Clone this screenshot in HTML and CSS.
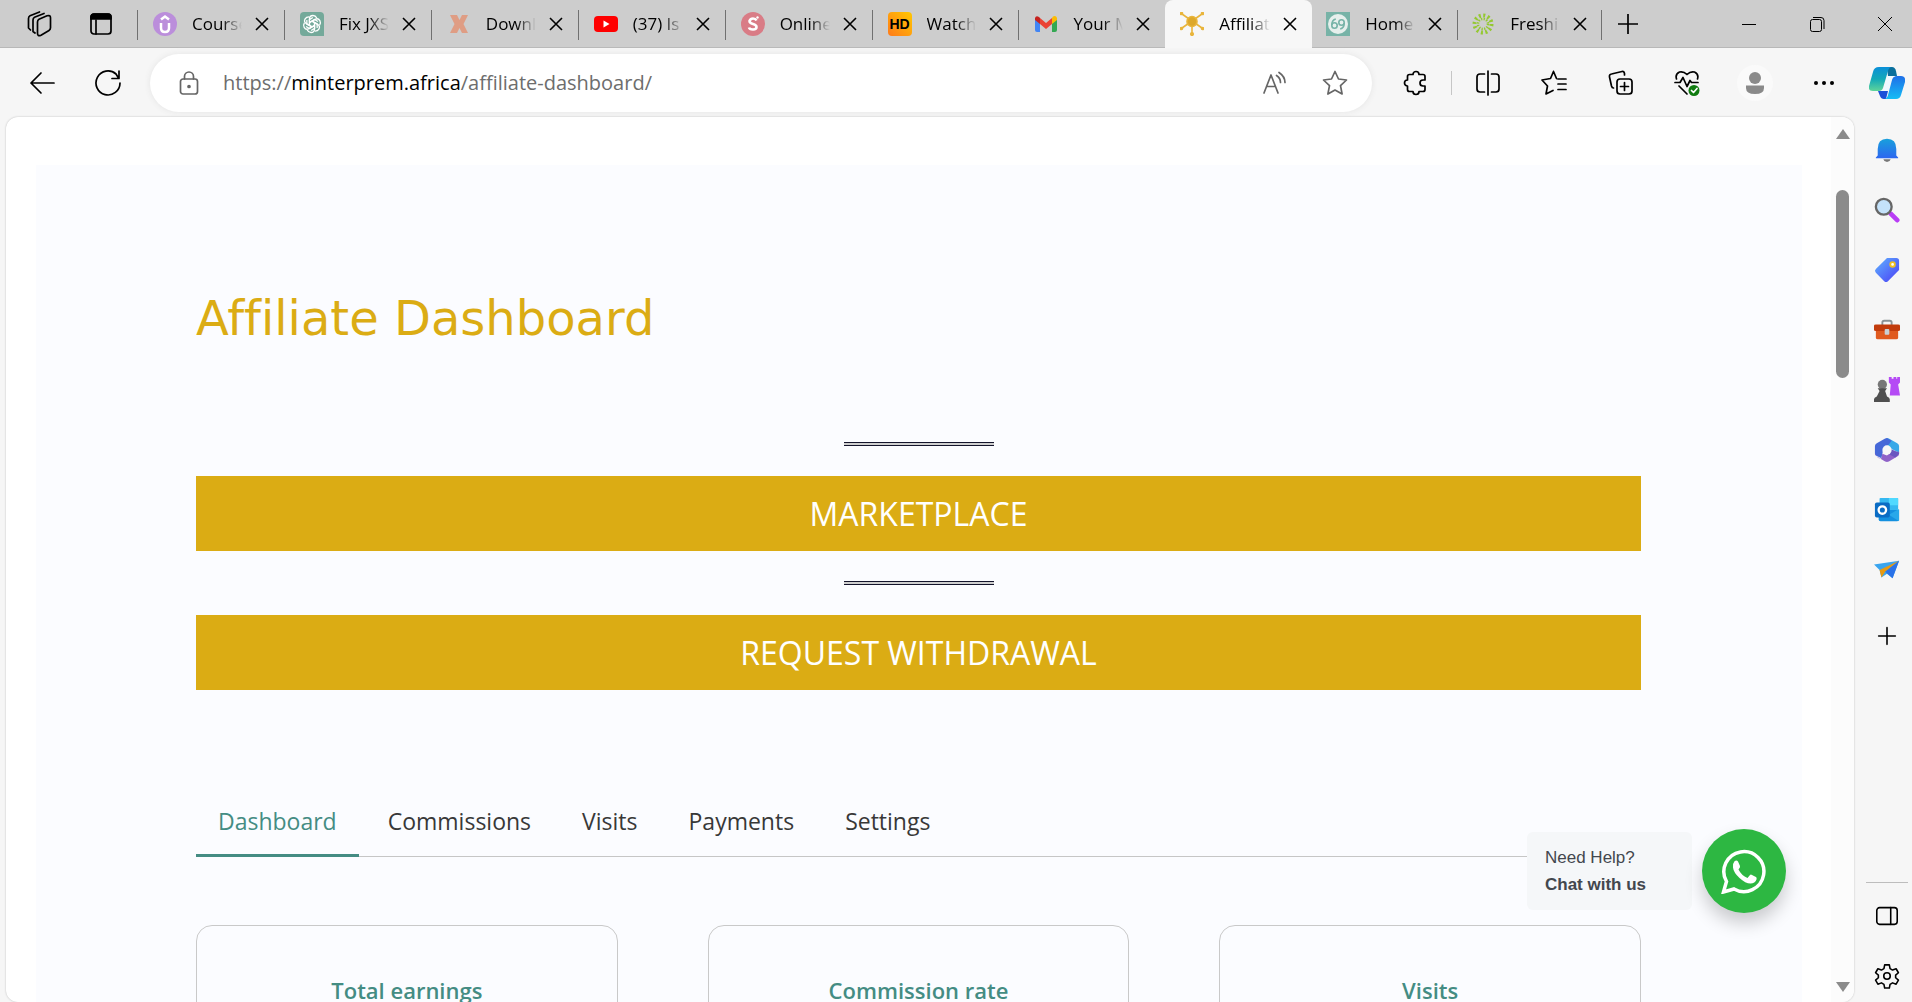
FILE: index.html
```html
<!DOCTYPE html>
<html lang="en">
<head>
<meta charset="utf-8">
<title>Affiliate Dashboard</title>
<link rel="stylesheet" href="styles.css">
</head>
<body>
<div class="browser">
  <header class="tabstrip">
    <div class="strip-tools">
      <button class="icon-btn" aria-label="Workspaces"><svg width="26" height="26" viewBox="0 0 26 26" class="line"><path d="M11.500 11q0-2 1.500-2.800l8-3.400q3.500-1 3.500 2v10q0 1.700-1.500 2.600l-8 4.800q-3.500 1.500-3.500-2z"/><path d="M9 22l-2-1.500V9q0-2 1.500-2.800L18 2.500M4.500 19L2.500 17V7.500q0-2 1.500-2.800L13.500 1"/></svg></button>
      <button class="icon-btn" aria-label="Tab actions"><svg width="22" height="22" viewBox="0 0 22 22" class="line"><rect x="1" y="1" width="20" height="20" rx="3"/><path d="M1 6V4q0-3 3-3h14q3 0 3 3v2z" fill="#000"/><path d="M6 7v14"/></svg></button>
    </div>
    <nav class="tabs" aria-label="Open tabs">
      <div class="tab"><svg class="fav" viewBox="0 0 24 24"><circle cx="12" cy="12" r="12" fill="#bb8edb"/><path d="M8 11v5q0 4 4 4t4-4v-5M8 7.500l4-3 4 3" fill="none" stroke="#fff" stroke-width="2.500"/></svg><span class="label">Course</span><button class="close" aria-label="Close tab"><svg viewBox="0 0 14 14"><path d="M1 1l12 12M13 1L1 13"/></svg></button></div>
      <div class="tab"><svg class="fav" viewBox="0 0 24 24"><path d="M4 0h16q4 0 4 4v20H4q-4 0-4-4V4q0-4 4-4z" fill="#74a99a"/><g fill="none" stroke="#fff" stroke-width="1.300"><path id="petal" d="M9.500 13.500V7q0-3.500 3.500-3.500 2.500 0 3.800 2.500M9.500 10.500l5-3 3.500 2"/><use href="#petal" transform="rotate(60 12 12)"/><use href="#petal" transform="rotate(120 12 12)"/><use href="#petal" transform="rotate(180 12 12)"/><use href="#petal" transform="rotate(240 12 12)"/><use href="#petal" transform="rotate(300 12 12)"/></g></svg><span class="label">Fix JXS</span><button class="close" aria-label="Close tab"><svg viewBox="0 0 14 14"><path d="M1 1l12 12M13 1L1 13"/></svg></button></div>
      <div class="tab"><svg class="fav" viewBox="0 0 24 24"><path d="M3 3h7l2.500 5L15 3h6l-4.500 9L21 21h-6l-2.500-5L10 21H3l4.500-9z" fill="#df9d84"/></svg><span class="label">Downl</span><button class="close" aria-label="Close tab"><svg viewBox="0 0 14 14"><path d="M1 1l12 12M13 1L1 13"/></svg></button></div>
      <div class="tab"><svg class="fav" viewBox="0 0 24 24"><rect y="4" width="24" height="16" rx="4" fill="#f00"/><path d="M9.500 8.500v7l6-3.500z" fill="#fff"/></svg><span class="label">(37) Is</span><button class="close" aria-label="Close tab"><svg viewBox="0 0 14 14"><path d="M1 1l12 12M13 1L1 13"/></svg></button></div>
      <div class="tab"><svg class="fav" viewBox="0 0 24 24"><circle cx="12" cy="12" r="12" fill="#d97c86"/><path d="M15.500 8.500q-1-2-3.500-2T8.500 9q0 2 3.500 3t3.500 3q0 2.500-3.500 2.500t-4-2" fill="none" stroke="#fff" stroke-width="2.600"/><circle cx="16.500" cy="5.500" r="1.200" fill="#fff"/></svg><span class="label">Online</span><button class="close" aria-label="Close tab"><svg viewBox="0 0 14 14"><path d="M1 1l12 12M13 1L1 13"/></svg></button></div>
      <div class="tab"><span class="fav fav-hd">HD</span><span class="label">Watch</span><button class="close" aria-label="Close tab"><svg viewBox="0 0 14 14"><path d="M1 1l12 12M13 1L1 13"/></svg></button></div>
      <div class="tab"><svg class="fav" viewBox="0 0 24 24"><path d="M1 6v12q0 2 2 2h3V9z" fill="#4285f4"/><path d="M23 6v12q0 2-2 2h-3V9z" fill="#34a853"/><path d="M18 6v6l5-4V6q-1-3-4-1.500z" fill="#fbbc04"/><path d="M6 6l6 5 6-5v6l-6 5-6-5z" fill="#ea4335"/><path d="M6 6v6L1 8V6q1-3 4-1z" fill="#c5221f"/></svg><span class="label">Your M</span><button class="close" aria-label="Close tab"><svg viewBox="0 0 14 14"><path d="M1 1l12 12M13 1L1 13"/></svg></button></div>
      <div class="tab active"><svg class="fav" viewBox="0 0 24 24"><g stroke="#e9b53c" stroke-width="1.600" fill="#e9b53c"><path d="M12 9L2 2M12 9l10-7M12 9L2 16M12 9l10 7M12 9v12"/><circle cx="12" cy="9.500" r="5" fill="#dda82a"/><circle cx="12" cy="22" r="1.300"/><circle cx="1.500" cy="1.500" r="1"/><circle cx="22.500" cy="1.500" r="1"/><circle cx="1.500" cy="16.500" r="1"/><circle cx="22.500" cy="16.500" r="1"/></g></svg><span class="label">Affiliat</span><button class="close" aria-label="Close tab"><svg viewBox="0 0 14 14"><path d="M1 1l12 12M13 1L1 13"/></svg></button></div>
      <div class="tab short"><svg class="fav" viewBox="0 0 24 24"><path d="M0 0h24v24H0z" fill="#77b3a7"/><circle cx="12" cy="12" r="10" fill="#e6efec"/><g fill="none" stroke="#77b3a7" stroke-width="1.600"><circle cx="8.500" cy="13.500" r="2.700"/><path d="M5.800 13q0-5 4-6"/><circle cx="15.500" cy="10.500" r="2.700"/><path d="M18.200 11q0 5-4 6"/></g></svg><span class="label">Home</span><button class="close" aria-label="Close tab"><svg viewBox="0 0 14 14"><path d="M1 1l12 12M13 1L1 13"/></svg></button></div>
      <div class="tab short"><svg class="fav" viewBox="0 0 24 24"><g fill="none" stroke="#94c830"><circle cx="12" cy="12" r="8.500" stroke-dasharray="2 2.450" stroke-width="4"/><circle cx="12" cy="12" r="5" stroke-dasharray="1.300 1.318" stroke-width="2.500"/></g></svg><span class="label">Freshi</span><button class="close" aria-label="Close tab"><svg viewBox="0 0 14 14"><path d="M1 1l12 12M13 1L1 13"/></svg></button></div>
    </nav>
    <button class="icon-btn new-tab" aria-label="New tab"><svg width="20" height="20" viewBox="0 0 20 20" class="line"><path d="M10 0v20M0 10h20"/></svg></button>
    <div class="window-controls">
      <button class="icon-btn" aria-label="Minimize"><svg width="16" height="16" viewBox="0 0 16 16" class="thin"><path d="M1 8.500h14"/></svg></button>
      <button class="icon-btn" aria-label="Restore"><svg width="16" height="16" viewBox="0 0 16 16" class="thin"><rect x="1.500" y="3.500" width="11" height="12" rx="2"/><path d="M4 1.500h8q3 0 3 3V13"/></svg></button>
      <button class="icon-btn" aria-label="Close window"><svg width="16" height="16" viewBox="0 0 16 16" class="thin"><path d="M1 1l14 14M15 1L1 15"/></svg></button>
    </div>
  </header>

  <div class="toolbar">
    <div class="nav-tools">
      <button class="icon-btn" aria-label="Back"><svg width="26" height="24" viewBox="0 0 26 24" class="line"><path d="M25 12H2M12 2L2 12l10 10"/></svg></button>
      <button class="icon-btn" aria-label="Refresh"><svg width="26" height="26" viewBox="0 0 26 26" class="line"><path d="M25 13a12 12 0 1 1-4-9l2.500 4M24 1v7.500h-7"/></svg></button>
    </div>
    <div class="address">
      <svg width="20" height="24" viewBox="0 0 20 24" class="line grey"><rect x="1.500" y="8" width="17" height="15" rx="2.500"/><path d="M5.500 8V5.500a4.500 4.500 0 0 1 9 0V8"/><circle cx="10" cy="15.500" r="1" fill="#666"/></svg>
      <a class="url" href="https://minterprem.africa/affiliate-dashboard/">https://<span class="host">minterprem.africa</span>/affiliate-dashboard/</a>
      <button class="icon-btn" aria-label="Read aloud"><svg width="26" height="24" viewBox="0 0 26 24" class="line grey"><path d="M2 22L9 4l7 18M4.500 15.500h9M14.500 4.500q4 2.500 4 7M17 1.500q6 4 6 10"/></svg></button>
      <button class="icon-btn" aria-label="Add to favorites"><svg width="26" height="26" viewBox="0 0 26 26" class="line grey"><path d="M13 1.500l3.500 7.500 8 1-6 5.700 1.600 8.300L13 20l-7.100 4 1.600-8.300-6-5.700 8-1z"/></svg></button>
    </div>
    <div class="actions">
      <button class="icon-btn" aria-label="Extensions"><svg width="26" height="26" viewBox="0 0 26 26" class="line"><path d="M6.500 4.500H10a3 3 0 0 1 6 0h4q2 0 2 2V10h-2a3 3 0 0 0 0 6h2v3.500q0 2-2 2h-4a3 3 0 0 1-6 0H6.500q-2 0-2-2V16a3 3 0 0 1 0-6V6.500q0-2 2-2z"/></svg></button>
      <span class="rule"></span>
      <button class="icon-btn" aria-label="Split screen"><svg width="26" height="26" viewBox="0 0 26 26" class="line"><path d="M13 1v24M9.500 4H5Q2 4 2 7v12q0 3 3 3h4.500M16.500 4H21q3 0 3 3v12q0 3-3 3h-4.500"/></svg></button>
      <button class="icon-btn" aria-label="Favorites"><svg width="26" height="26" viewBox="0 0 26 26" class="line"><path d="M17 9h8M17 14h8M17 19.500h8M12.500 1.500l-3 7L1 10l5.500 6-1.500 8 7-3.500M12.500 1.500l3 7"/></svg></button>
      <button class="icon-btn" aria-label="Collections"><svg width="26" height="26" viewBox="0 0 26 26" class="line"><rect x="9" y="9" width="15" height="15" rx="3"/><path d="M16.500 12.500v8M12.500 16.500h8M5.500 18Q4 18 3.500 16L1.500 7Q1 4.500 3.500 4L14 1.500q2-.5 2.500 2V5"/></svg></button>
      <button class="icon-btn" aria-label="Browser essentials"><svg width="26" height="26" viewBox="0 0 26 26" class="line"><path d="M2.500 9q-1.500-5 3-7 4-1 7.500 2.500Q16.500 1 20.500 2q4.500 2 3 7M1 12.500h5l3-5 4 9 3-6 1.500 2H24M5 16l8 8"/><circle cx="20" cy="20.500" r="5.500" fill="#107c10" stroke="none"/><path d="M17.500 20.500l2 2 3.500-4" stroke="#fff"/></svg></button>
      <button class="icon-btn avatar" aria-label="Profile"><svg width="20" height="24" viewBox="0 0 20 24" fill="#8a8a8a"><circle cx="10" cy="7" r="6"/><path d="M1 14.500h18v2.500q0 6-9 6t-9-6z"/></svg></button>
      <button class="icon-btn" aria-label="Settings and more"><svg width="22" height="6" viewBox="0 0 22 6"><circle cx="3" cy="3" r="2"/><circle cx="11" cy="3" r="2"/><circle cx="19" cy="3" r="2"/></svg></button>
    </div>
    <button class="icon-btn copilot" aria-label="Copilot"><svg width="36" height="34" viewBox="0 0 36 34"><defs><linearGradient id="cpa" x1="0" y1="0" x2="0" y2="1"><stop offset="0" stop-color="#0a8fd8"/><stop offset=".5" stop-color="#12a9b8"/><stop offset="1" stop-color="#5fd49a"/></linearGradient><linearGradient id="cpb" x1="0" y1="0" x2="0" y2="1"><stop offset="0" stop-color="#1f6fe8"/><stop offset="1" stop-color="#15bdf5"/></linearGradient></defs><path d="M9 25h10l-2 8h-2q-3 0-4-3z" fill="#1b50d8"/><path d="M18 1h5q3 0 4 4l1 5h-9z" fill="#0b6f9c"/><path d="M10 1h13q-3 0-4 4l-5 17q-1 3-4 3H4q-5 0-4-5L4 6q1-5 6-5z" fill="url(#cpa)"/><path d="M27 33H15q3 0 4-4l4-15q1-4 5-4h4q5 0 4 6l-4 13q-1 4-5 4z" fill="url(#cpb)"/><path d="M20 10h6q-3 1-4 5l-2 7q-1 3-4 3h-4q2 0 3-3l3-10q0-2 2-2z" fill="#eef9ff"/></svg></button>
  </div>

  <div class="workspace">
    <div class="viewport">
      <main class="page">
        <section class="panel">
          <h1>Affiliate Dashboard</h1>
          <hr>
          <button class="cta">MARKETPLACE</button>
          <hr>
          <button class="cta">REQUEST WITHDRAWAL</button>
          <nav class="menu">
            <a href="#dashboard" class="current">Dashboard</a>
            <a href="#commissions">Commissions</a>
            <a href="#visits">Visits</a>
            <a href="#payments">Payments</a>
            <a href="#settings">Settings</a>
          </nav>
          <div class="cards">
            <article class="card"><h2>Total earnings</h2></article>
            <article class="card"><h2>Commission rate</h2></article>
            <article class="card"><h2>Visits</h2></article>
          </div>
        </section>
      </main>
      <div class="scrollbar"><span class="arrow up"></span><span class="thumb"></span><span class="arrow down"></span></div>
      <aside class="chat">
        <div class="bubble">Need Help?<br><strong>Chat with us</strong></div>
        <button class="whatsapp" aria-label="Chat on WhatsApp"><svg width="46" height="46" viewBox="0 0 46 46"><path d="M2.500 44l3-10.500A20 20 0 1 1 13 41z" fill="none" stroke="#fff" stroke-width="3.500"/><path d="M15 12.500q1.500 0 2 1l2 4.500q.5 1-1.500 3.500 3 6 9 8.500l2.500-3q.6-.7 1.500-.3l4.500 2.200q1 .6.500 2.600-1.500 4-6 4-5 0-11-5.500T12 19.500q-.5-4 1.500-6.200z" fill="#fff"/></svg></button>
      </aside>
    </div>
    <aside class="sidebar">
      <button class="side" aria-label="Notifications"><svg viewBox="0 0 28 28"><path d="M10 24h8q-1 3-4 3t-4-3z" fill="#777"/><path d="M4 20v-7Q4 2 14 2t10 11v7l2 2v1H2v-1z" fill="url(#bell)"/><defs><linearGradient id="bell" x1="0" y1="0" x2="0" y2="1"><stop offset="0" stop-color="#18a0dc"/><stop offset="1" stop-color="#2d66f0"/></linearGradient></defs></svg></button>
      <button class="side" aria-label="Search"><svg viewBox="0 0 28 28"><path d="M18 18l7 7" stroke="#b83df5" stroke-width="5" stroke-linecap="round"/><circle cx="10.500" cy="10.500" r="8.500" fill="#c4e2fa" stroke="#666" stroke-width="2.500"/></svg></button>
      <button class="side" aria-label="Shopping"><svg viewBox="0 0 28 28"><defs><linearGradient id="tag" x1="0" y1="0" x2="1" y2="1"><stop offset="0" stop-color="#5fb4ff"/><stop offset="1" stop-color="#4a3df5"/></linearGradient></defs><path d="M14 1h10q3 0 3 3v10L15 26q-2 2-4 0l-9-9q-2-2 0-4z" fill="url(#tag)"/><circle cx="20" cy="8" r="2.500" fill="#fff" stroke="#f0c020" stroke-width="2"/></svg></button>
      <button class="side" aria-label="Tools"><svg viewBox="0 0 28 28"><path d="M9 9V6q0-2 2-2h6q2 0 2 2v3" fill="none" stroke="#8a9295" stroke-width="2"/><rect x="2" y="9" width="24" height="15" rx="2" fill="#e05a1e"/><path d="M0 9q0-1 2-1h24q2 0 2 1v5q0 1-2 1H2q-2 0-2-1z" fill="#c23c0c"/><rect x="11.500" y="13" width="5" height="6" rx="1" fill="#c9d0d4"/></svg></button>
      <button class="side" aria-label="Games"><svg viewBox="0 0 28 28"><path d="M16 0h3v2h2V0h3v2h1V0h3v6l-2 2 2 12H17l1-12-2-2z" fill="#b54af5"/><circle cx="9" cy="8" r="5" fill="#777"/><path d="M4 12h10l-2 3 2 6q3 1 3 3v3H0v-3q0-2 3-3l3-6z" fill="#505050"/></svg></button>
      <button class="side" aria-label="Microsoft 365"><svg viewBox="0 0 28 28"><path d="M14 1q1 0 2 .6l9 5.200q2 1 2 3V17l-8-4-5-4-4-4z" fill="#38a8e8"/><path d="M14 1q-1 0-2 .6L3 6.800Q1 8 1 10v8q0 1 1 2l6 3 2-10 6-5 3-4z" fill="#4668d8"/><path d="M2 18q0 2 1 3l9 5.500q2 1 4 0l9-5.500q2-1 2-3v-2l-9 0-4 4-5-2-1 5q-4 1-7-5z" fill="#8f62c8"/><path d="M18 13l9 4v1l-4 4-6-3z" fill="#6a56c0"/><circle cx="14" cy="14" r="5" fill="#f7f7f7"/></svg></button>
      <button class="side" aria-label="Outlook"><svg viewBox="0 0 28 28"><rect x="6" y="1" width="20" height="13" rx="1" fill="#35b8f1"/><path d="M16 1h9q1 0 1 1v7H16z" fill="#50d9ff"/><path d="M5 14h22v10q0 2-2 2H7q-2 0-2-2z" fill="#1490df"/><path d="M27 13v13l-11-7z" fill="#28a8ea"/><rect x="1" y="6" width="16" height="16" rx="2" fill="#0a6cc4"/><circle cx="9" cy="14" r="4" fill="none" stroke="#fff" stroke-width="2.500"/></svg></button>
      <button class="side" aria-label="Drop"><svg viewBox="0 0 28 28"><path d="M0 8l27-4-7 19-6-5-6 4-2-8z" fill="#3aa5ef"/><path d="M27 4L6 14l2 8 4-6z" fill="#e89a12"/><path d="M27 4l-7 19-8-7z" fill="#2a72e8"/></svg></button>
      <button class="side add" aria-label="Customize"><svg viewBox="0 0 28 28" class="line"><path d="M14 5v18M5 14h18"/></svg></button>
      <div class="side-bottom">
        <button class="side" aria-label="Toggle sidebar"><svg viewBox="0 0 28 28" class="line"><rect x="3" y="5" width="22" height="18" rx="3"/><path d="M18 5v18"/></svg></button>
        <button class="side" aria-label="Settings"><svg viewBox="0 0 28 28" class="line"><path d="M11.500 2h5l.8 4 2.700 1.600 3.800-1.400 2.500 4.300-3 2.600v2.800l3 2.600-2.500 4.300-3.800-1.400-2.700 1.600-.8 4h-5l-.8-4L8 21.400l-3.800 1.400-2.500-4.300 3-2.600v-2.800l-3-2.600 2.500-4.300L8 7.600 10.700 6z"/><circle cx="14" cy="14" r="3.500"/></svg></button>
      </div>
    </aside>
  </div>
</div>
</body>
</html>
```

FILE: styles.css
```css
* { box-sizing: border-box; }
body { margin: 0; font-family: "Open Sans", "Noto Sans", sans-serif; color: #000; }
button { border: 0; padding: 0; background: none; font: inherit; color: inherit; }
svg { display: block; }
.line { fill: none; stroke: #000; stroke-width: 1.7; stroke-linecap: round; stroke-linejoin: round; }
.thin { fill: none; stroke: #000; stroke-width: 1; }
.grey { stroke: #666; }

.browser { height: 100vh; display: flex; flex-direction: column; overflow: hidden; background: #f6f6f6; }
.icon-btn { display: flex; align-items: center; justify-content: center; flex: none; }

.tabstrip { height: 48px; flex: none; display: flex; background: #cdcdcd; box-shadow: inset 0 -1px #b8b8b8; }
.strip-tools { width: 137px; flex: none; display: flex; align-items: center; gap: 38px; padding-left: 26px; }
.tabs { flex: 0 1 1465px; min-width: 0; display: flex; }
.tab { flex: 0 1 147px; min-width: 0; display: flex; align-items: center; padding: 0 15px 0 16px; background: linear-gradient(#707070, #707070) left 10px / 1px 30px no-repeat; }
.tab.short { flex-basis: 145px; padding-left: 14px; }
.tab.active { background: #f7f7f7; border-radius: 8px 8px 0 0; padding-left: 15px; }
.tab.active + .tab { background: none; }
.tab:last-child { background: linear-gradient(#707070, #707070) left 10px / 1px 30px no-repeat, linear-gradient(#707070, #707070) right 10px / 1px 30px no-repeat; }
.fav { width: 24px; height: 24px; flex: none; margin-right: 15px; }
.fav-hd { border-radius: 4px; background: linear-gradient(45deg, #ff7a1a, #ffc800); font: bold 14px/24px "Liberation Sans", sans-serif; text-align: center; }
.label { flex: 1; min-width: 0; overflow: hidden; white-space: nowrap; font-size: 17px; line-height: 28px; -webkit-mask-image: linear-gradient(to left, transparent, #000 20px); mask-image: linear-gradient(to left, transparent, #000 20px); }
.close { margin-left: 13px; flex: none; }
.close svg { width: 14px; height: 14px; fill: none; stroke: #000; stroke-width: 1.6; }
.new-tab { width: 52px; }
.window-controls { margin-left: auto; display: flex; gap: 52px; padding-right: 19px; }

.toolbar { height: 69px; flex: none; display: flex; align-items: center; }
.nav-tools { width: 150px; flex: none; display: flex; gap: 40px; padding-left: 29px; }
.address { flex: 1; min-width: 0; height: 58px; display: flex; align-items: center; gap: 34px; padding: 0 24px 0 29px; border-radius: 29px; background: #fff; box-shadow: 0 0 6px #e4e4e4; }
.url { flex: 1; min-width: 0; color: #6d6d6d; text-decoration: none; font-size: 20px; line-height: 28px; white-space: nowrap; margin-left: -10px; }
.host { color: #000; }
.actions { width: 482px; flex: none; display: flex; align-items: center; justify-content: space-between; padding: 0 19px 0 31px; }
.rule { width: 1px; height: 24px; background: #c6c6c6; margin: 0 -18px; }
.avatar { width: 36px; height: 36px; border-radius: 50%; background: #fafafa; margin: 0 0 0 -4px; }
.copilot { width: 58px; padding-left: 8px; }

.workspace { flex: 1; min-height: 0; display: flex; padding-left: 6px; }
.viewport { position: relative; flex: 1; min-width: 0; display: flex; overflow: hidden; background: #fff; border-radius: 12px; box-shadow: 0 0 2px #b8b8b8; }
.page { flex: 1; min-width: 0; padding: 48px 29px 0 30px; }
.panel { height: 1200px; padding: 118px 161px 0 160px; background: #fbfcff; }
h1 { margin: 0 0 89px; font: 400 48px/70px "DejaVu Sans", sans-serif; font-variant-ligatures: none; color: #dbac14; }
hr { width: 150px; height: 4px; margin: 0 auto; border: 1px solid #14142b; border-width: 1px 0; background: #cfcfcf; }
.cta { display: block; width: 100%; height: 75px; margin: 30px 0; background: #dbac14; color: #fff; font-size: 32px; line-height: 48px; }
.menu { display: flex; margin-top: 93px; height: 74px; border-bottom: 1px solid #c6c6c6; }
.menu a { padding: 22px 22px 0; height: 74px; color: #383838; text-decoration: none; font-size: 23px; line-height: 32px; margin-right: 7px; }
.menu .current { color: #448c83; border-bottom: 3px solid #448c83; }
.cards { display: grid; grid-template-columns: repeat(3, 1fr); gap: 90px; margin-top: 68px; }
.card { height: 240px; border: 1px solid #c9c9c9; border-radius: 16px; padding-top: 48px; text-align: center; }
h2 { margin: 0; font-size: 22px; line-height: 32px; font-weight: 600; color: #448c83; }

.scrollbar { width: 23px; flex: none; display: flex; flex-direction: column; align-items: center; padding: 12px 0 10px; background: #fcfcfc; }
.arrow { border: 7px solid transparent; }
.up { border-top: 0; border-bottom: 10px solid #8b8b8b; }
.down { border-bottom: 0; border-top: 10px solid #8b8b8b; margin-top: auto; }
.thumb { width: 13px; height: 188px; margin-top: 51px; border-radius: 7px; background: #8b8b8b; }
.chat { position: absolute; right: 68px; bottom: 89px; display: flex; align-items: center; gap: 10px; }
.bubble { width: 165px; height: 78px; padding: 12px 18px; border-radius: 6px; background: #f5f7f9; color: #43474e; font: 17px/27px "Liberation Sans", Arial, sans-serif; }
.whatsapp { width: 84px; height: 84px; display: flex; align-items: center; justify-content: center; border-radius: 50%; background: #2db742; box-shadow: 0 10px 18px rgba(0, 0, 0, .2); }

.sidebar { width: 58px; flex: none; display: flex; flex-direction: column; align-items: center; padding: 3px 0 0 8px; }
.side { height: 60px; flex: none; display: flex; align-items: center; }
.side svg { width: 26px; height: 26px; }
.add { margin-top: 6px; }
.side-bottom { width: 42px; margin: auto 0 -4px; display: flex; flex-direction: column; align-items: center; border-top: 1px solid #bdbdbd; padding-top: 3px; }
```
